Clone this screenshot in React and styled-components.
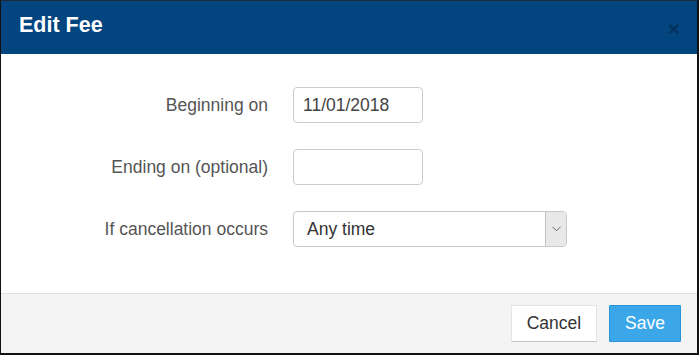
import React from 'react';
import styled, { createGlobalStyle } from 'styled-components';

const GlobalStyle = createGlobalStyle`
  html, body {
    margin: 0;
    padding: 0;
    background: #ffffff;
  }
  body {
    font-family: 'Liberation Sans', Arial, sans-serif;
  }
`;

const Dialog = styled.div`
  box-sizing: border-box;
  width: 699px;
  height: 355px;
  display: flex;
  flex-direction: column;
  border-top: 1px solid #1c2a3a;
  border-left: 1px solid #111;
  border-right: 2px solid #111;
  border-bottom: 2px solid #111;
  background: #fff;
`;

const Header = styled.div`
  height: 53px;
  flex: none;
  display: flex;
  align-items: center;
  justify-content: space-between;
  padding: 0 17px 0 18px;
  background: #03457f;
`;

const Title = styled.h4`
  margin: 0 0 4px;
  color: #fff;
  font-size: 21.5px;
  font-weight: bold;
`;

const Close = styled.button`
  border: 0;
  padding: 0;
  background: none;
  color: #000;
  opacity: 0.25;
  font-family: 'Liberation Sans', Arial, sans-serif;
  font-size: 21px;
  font-weight: bold;
  line-height: 1;
  margin-top: 1px;
`;

const Body = styled.div`
  flex: 1;
  padding: 33px 0 0;
`;

const Form = styled.div`
  display: grid;
  grid-template-columns: 267px auto;
  column-gap: 25px;
  row-gap: 26px;
  align-items: center;
`;

const Label = styled.label`
  text-align: right;
  color: #555;
  font-size: 17.5px;
`;

const Input = styled.div`
  box-sizing: border-box;
  width: 130px;
  height: 36px;
  border: 1px solid #ccc;
  border-radius: 4px;
  padding: 0 9px;
  display: flex;
  align-items: center;
  color: #444;
  font-size: 17.5px;
`;

const Select = styled.div`
  box-sizing: border-box;
  width: 274px;
  height: 36px;
  border: 1px solid #c8c8c8;
  border-radius: 4px;
  display: flex;
  align-items: stretch;
  overflow: hidden;
  color: #333;
  font-size: 17.5px;
`;

const SelectValue = styled.div`
  flex: 1;
  display: flex;
  align-items: center;
  padding-left: 13px;
`;

const Arrow = styled.div`
  width: 20px;
  display: flex;
  align-items: center;
  justify-content: center;
  background: #e8e8e8;
  border-left: 1px solid #c2c2c2;
`;

const Footer = styled.div`
  height: 60px;
  flex: none;
  box-sizing: border-box;
  border-top: 1px solid #e2e2e2;
  background: #f4f4f4;
  display: flex;
  justify-content: flex-end;
  align-items: flex-start;
  gap: 12px;
  padding: 11px 16px 0 0;
`;

const Button = styled.button`
  box-sizing: border-box;
  height: 37px;
  padding: 0 15px;
  font-family: 'Liberation Sans', Arial, sans-serif;
  font-size: 17.5px;
  border-radius: 1px;
  border: 1px solid ${(p) => (p.primary ? '#2b95d9' : '#e4e4e4')};
  border-bottom-color: ${(p) => (p.primary ? '#2b95d9' : '#c4c4c4')};
  background: ${(p) => (p.primary ? '#3ba7e8' : '#fff')};
  color: ${(p) => (p.primary ? '#fff' : '#333')};
`;

const App = () => {
  return (
    <>
      <GlobalStyle />
      <Dialog>
        <Header>
          <Title>Edit Fee</Title>
          <Close>×</Close>
        </Header>
        <Body>
          <Form>
            <Label>Beginning on</Label>
            <Input>11/01/2018</Input>
            <Label>Ending on (optional)</Label>
            <Input />
            <Label>If cancellation occurs</Label>
            <Select>
              <SelectValue>Any time</SelectValue>
              <Arrow>
                <svg width="9" height="6" viewBox="0 0 9 6">
                  <path d="M0.5 0.8 L4.5 4.8 L8.5 0.8" fill="none" stroke="#666" strokeWidth="1" />
                </svg>
              </Arrow>
            </Select>
          </Form>
        </Body>
        <Footer>
          <Button>Cancel</Button>
          <Button primary>Save</Button>
        </Footer>
      </Dialog>
    </>
  );
};

export default App;
